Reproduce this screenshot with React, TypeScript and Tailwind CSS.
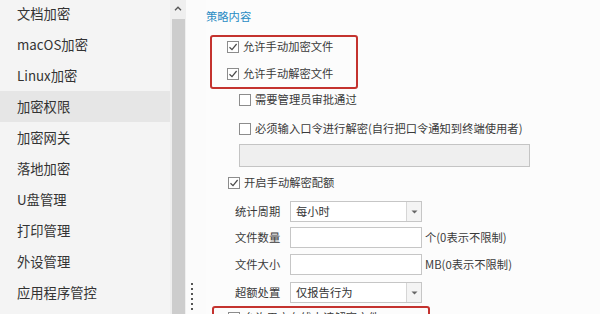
import React from "react";

const FONT = { fontFamily: '"Noto Sans CJK SC", "Noto Sans", sans-serif' };

function Box({ checked }: { checked?: boolean }) {
  return (
    <div className="w-[12px] h-[12px] border border-[#8c8c8c] bg-white flex items-center justify-center shrink-0">
      {checked && (
        <svg width="10" height="10" viewBox="0 0 10 10">
          <path d="M1.5 5.2 L4 7.6 L8.6 2" fill="none" stroke="#4a4a4a" strokeWidth="1.2" />
        </svg>
      )}
    </div>
  );
}

function CheckRow({ checked, label, className = "" }: { checked?: boolean; label: string; className?: string }) {
  return (
    <div className={`flex items-center gap-[4px] h-[18px] shrink-0 ${className}`}>
      <Box checked={checked} />
      <span className="text-[11.3px] text-[#3a3a3a] whitespace-nowrap leading-none">{label}</span>
    </div>
  );
}

function Select({ value }: { value: string }) {
  return (
    <div className="w-[132px] h-[21px] border border-[#c6c6c6] bg-white flex">
      <div className="flex-1 flex items-center pl-[5px] text-[11.3px] text-[#333] leading-none">{value}</div>
      <div className="w-[15px] border-l border-[#d6d6d6] bg-[#f4f4f4] flex items-center justify-center">
        <svg width="7" height="4" viewBox="0 0 7 4">
          <path d="M0.5 0.5 L6.5 0.5 L3.5 3.5 Z" fill="#666" />
        </svg>
      </div>
    </div>
  );
}

function FieldRow({ label, children, className = "" }: { label: string; children: React.ReactNode; className?: string }) {
  return (
    <div className={`flex items-center h-[21px] ml-[29px] shrink-0 ${className}`}>
      <span className="w-[48px] text-[11.3px] text-[#3a3a3a] whitespace-nowrap leading-none">{label}</span>
      <div className="ml-[7px] flex items-center">{children}</div>
    </div>
  );
}

const menu = ["文档加密", "macOS加密", "Linux加密", "加密权限", "加密网关", "落地加密", "U盘管理", "打印管理", "外设管理", "应用程序管控"];

export default function App() {
  return (
    <div className="w-[600px] h-[314px] overflow-hidden flex bg-[#fbfbfb]" style={FONT}>
      {/* sidebar */}
      <div className="w-[170px] bg-[#f4f4f4] flex flex-col">
        <div className="flex flex-col -mt-[2px]">
          {menu.map((m) => (
            <div
              key={m}
              className={`h-[31px] shrink-0 flex items-center pl-[17px] text-[13.3px] text-[#333] whitespace-nowrap ${m === "加密权限" ? "bg-[#e6e6e6]" : ""}`}
            >
              {m}
            </div>
          ))}
        </div>
      </div>
      {/* scrollbar */}
      <div className="w-[16px] bg-[#efefef] flex flex-col items-center">
        <div className="h-[16px] flex items-center justify-center">
          <svg width="8" height="5" viewBox="0 0 8 5">
            <path d="M1 4.2 L4 1.2 L7 4.2" fill="none" stroke="#555" strokeWidth="1.3" />
          </svg>
        </div>
        <div className="w-[13px] flex-1 mt-[3px] bg-[#cdcdcd]" />
      </div>
      {/* gutter with splitter dots */}
      <div className="w-[20px] flex flex-col justify-end items-start pl-[5px] pb-[4px]">
        <div className="flex flex-col gap-[3px]">
          {[0, 1, 2, 3, 4, 5].map((i) => (
            <div key={i} className="w-[2px] h-[2px] bg-[#555]" />
          ))}
        </div>
      </div>
      {/* content */}
      <div className="flex-1 flex flex-col bg-[#fcfcfc] overflow-hidden">
        <div className="h-[18px] shrink-0 mt-[8px] flex items-center text-[11.3px] text-[#2a8cc4] leading-none">策略内容</div>
        <div className="mt-[9px] ml-[4px] w-[148px] h-[54px] shrink-0 border-2 border-[#c4332f] rounded-[3px] flex flex-col pt-[1px] pl-[15px] gap-[9px]">
          <CheckRow checked label="允许手动加密文件" />
          <CheckRow checked label="允许手动解密文件" />
        </div>
        <CheckRow label="需要管理员审批通过" className="mt-[2px] ml-[33px]" />
        <CheckRow label="必须输入口令进行解密(自行把口令通知到终端使用者)" className="mt-[11px] ml-[33px]" />
        <div className="mt-[6px] ml-[33px] w-[291px] h-[23px] shrink-0 border border-[#c4c4c4] bg-[#efefef]" />
        <CheckRow checked label="开启手动解密配额" className="mt-[7px] ml-[22px]" />
        <FieldRow label="统计周期" className="mt-[9px]">
          <Select value="每小时" />
        </FieldRow>
        <FieldRow label="文件数量" className="mt-[5px]">
          <div className="w-[132px] h-[21px] border border-[#c6c6c6] bg-white" />
          <span className="ml-[3px] text-[11.3px] text-[#3a3a3a] whitespace-nowrap leading-none">个(0表示不限制)</span>
        </FieldRow>
        <FieldRow label="文件大小" className="mt-[6px]">
          <div className="w-[132px] h-[21px] border border-[#c6c6c6] bg-white" />
          <span className="ml-[3px] text-[11.3px] text-[#3a3a3a] whitespace-nowrap leading-none">MB(0表示不限制)</span>
        </FieldRow>
        <FieldRow label="超额处置" className="mt-[7px]">
          <Select value="仅报告行为" />
        </FieldRow>
        <div className="mt-[3px] ml-[6px] w-[218px] h-[40px] shrink-0 border-2 border-[#c4332f] rounded-[3px] flex pl-[14px] pt-[1px]">
          <CheckRow label="允许用户在线申请解密文件" />
        </div>
      </div>
    </div>
  );
}
